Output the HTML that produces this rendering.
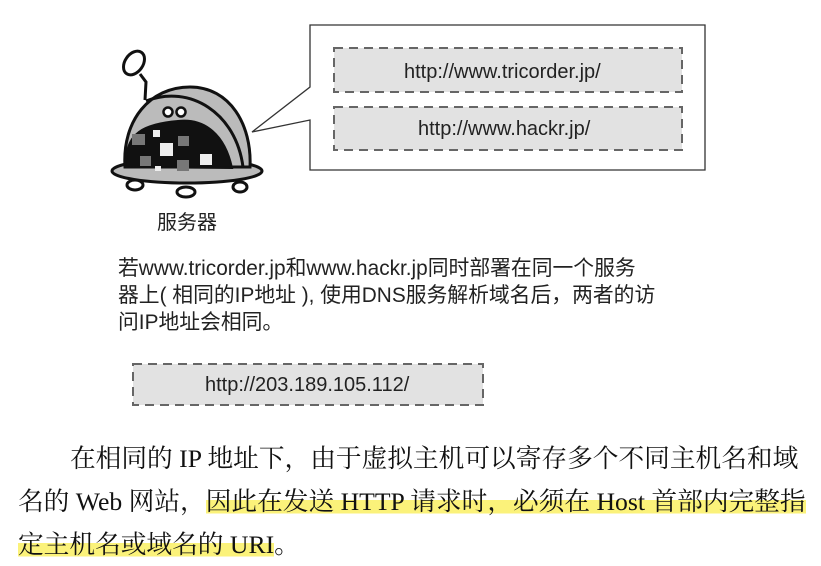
<!DOCTYPE html>
<html><head><meta charset="utf-8"><style>
body{margin:0;width:821px;height:566px;background:#fff;overflow:hidden;position:relative}
.s{position:absolute;font-family:"Liberation Sans","Noto Sans CJK SC",sans-serif;color:#222;white-space:nowrap}
.t{position:absolute;font-family:"Liberation Serif","Noto Serif CJK SC",serif;font-size:25.7px;color:#111;white-space:nowrap}
.hl{background:linear-gradient(transparent 45%,#fbf27a 45%,#fbf27a 92%,transparent 92%)}
</style></head><body>
<svg width="821" height="566" style="position:absolute;left:0;top:0">
<path d="M310,25 H705 V170 H310 V120 L252,132 L310,87 Z" fill="#fff" stroke="#333" stroke-width="1.3"/>
<g fill="#e2e2e2" stroke="#666" stroke-width="2" stroke-dasharray="9,6">
<rect x="334" y="48" width="348" height="44"/>
<rect x="334" y="107" width="348" height="43"/>
<rect x="133" y="364" width="350" height="41"/>
</g>
<g stroke="#111" stroke-width="3">
<ellipse cx="135" cy="185" rx="8" ry="5" fill="#fff"/>
<ellipse cx="186" cy="192" rx="9" ry="5" fill="#fff"/>
<ellipse cx="240" cy="187" rx="7" ry="5" fill="#fff"/>
<ellipse cx="187" cy="171" rx="75" ry="12" fill="#bbb"/>
<path d="M145,100 L146,82 L140,74" fill="none"/>
<ellipse cx="134" cy="63" rx="9" ry="13" fill="#fff" transform="rotate(35 134 63)"/>
<path d="M125,167 C122,120 150,87 190,87 C230,87 252,125 250,167 Z" fill="#bbb"/>
<path d="M126,167 C124,132 145,124 178,121 C205,118 225,135 232,168 Z" fill="#111" stroke-width="2"/>
<path d="M146,101 C190,84 236,113 243,167" fill="none"/>
</g>
<g fill="#fff" stroke="#111" stroke-width="2.5"><circle cx="168" cy="112" r="4.5"/><circle cx="181" cy="112" r="4.5"/></g>
<g fill="#777"><rect x="132" y="134" width="13" height="11"/><rect x="178" y="136" width="11" height="10"/><rect x="140" y="156" width="11" height="10"/><rect x="177" y="160" width="12" height="11"/></g>
<g fill="#eee"><rect x="153" y="130" width="7" height="7"/><rect x="160" y="143" width="13" height="13"/><rect x="200" y="154" width="12" height="11"/><rect x="155" y="166" width="6" height="5"/></g>
</svg>
<div class="s" style="left:157px;top:206px;font-size:20px">服务器</div>
<div class="s" style="left:404px;top:61px;font-size:20px">http://www.tricorder.jp/</div>
<div class="s" style="left:418px;top:118px;font-size:20px">http://www.hackr.jp/</div>
<div class="s" style="left:118px;top:255px;font-size:20.8px;line-height:27px">若www.tricorder.jp和www.hackr.jp同时部署在同一个服务<br>器上( 相同的IP地址 ), 使用DNS服务解析域名后，两者的访<br>问IP地址会相同。</div>
<div class="s" style="left:205px;top:374px;font-size:20px">http://203.189.105.112/</div>
<div class="t" style="left:70px;top:438px">在相同的 IP 地址下，由于虚拟主机可以寄存多个不同主机名和域</div>
<div class="t" style="left:18px;top:481px">名的 Web 网站，<span class="hl">因此在发送 HTTP 请求时，必须在 Host 首部内完整指</span></div>
<div class="t" style="left:18px;top:524px"><span class="hl">定主机名或域名的 URI</span>。</div>
</body></html>
